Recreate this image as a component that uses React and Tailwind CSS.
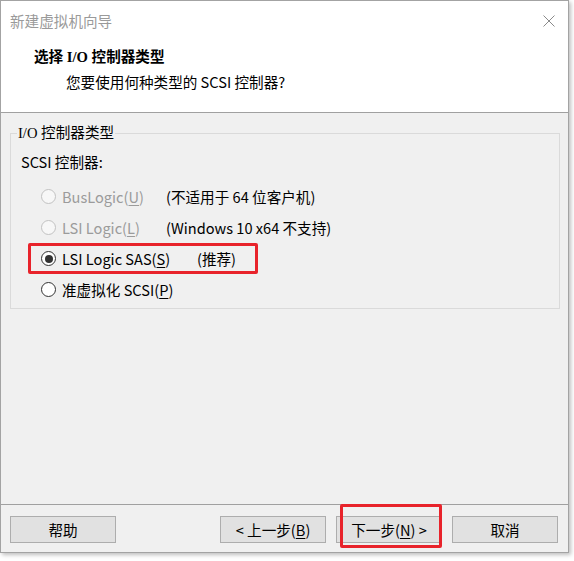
import React from "react";

const ui = { fontFamily: '"Noto Sans CJK SC", sans-serif' };
const serifMix = { fontFamily: '"Liberation Serif", "Noto Sans CJK SC", serif' };

function Radio({ state }) {
  if (state === "disabled")
    return <span className="w-[15px] h-[15px] rounded-full border border-[#c2c2c2] bg-[#f7f7f7] shrink-0" />;
  if (state === "checked")
    return (
      <span className="w-[15px] h-[15px] rounded-full border border-[#333333] bg-white shrink-0 flex items-center justify-center">
        <span className="w-[8px] h-[8px] rounded-full bg-[#333333]" />
      </span>
    );
  return <span className="w-[15px] h-[15px] rounded-full border border-[#333333] bg-white shrink-0" />;
}

function Row({ state, label, desc, labelW = "w-[104px]", highlight }) {
  return (
    <div className="relative h-[31px] flex items-center pl-[30px] whitespace-nowrap">
      <Radio state={state} />
      <span className={`ml-[6px] ${desc ? labelW : ""} shrink-0 ${state === "disabled" ? "text-[#9b9b9b]" : "text-black"}`}>{label}</span>
      {desc && <span className="text-black">{desc}</span>}
      {highlight && (
        <span className="absolute left-[17px] top-0 w-[230px] h-[31px] border-[3px] border-[#e8232b] rounded-[2px]" />
      )}
    </div>
  );
}

function Btn({ children }) {
  return (
    <div className="w-[106px] h-[27px] bg-[#e1e1e1] border border-[#adadad] flex items-center justify-center text-black whitespace-nowrap">
      {children}
    </div>
  );
}

export default function App() {
  return (
    <div className="w-[574px] h-[561px] bg-white text-[14.6px] leading-[20px]" style={ui}>
      <div className="w-[569px] h-[553px] border border-[#a3a3a3] bg-[#f0f0f0] flex flex-col shadow-[2px_2px_4px_rgba(0,0,0,0.25)]">
        <div className="h-[112px] bg-white border-b border-[#a0a0a0] shrink-0">
          <div className="h-[40px] flex items-center justify-between pl-[9px] pr-[13px]">
            <span className="text-[#9a9a9a]">新建虚拟机向导</span>
            <svg width="12" height="12" viewBox="0 0 12 12">
              <path d="M0.5 0.5 L11.5 11.5 M11.5 0.5 L0.5 11.5" stroke="#8a8a8a" strokeWidth="1" fill="none" />
            </svg>
          </div>
          <div className="mt-[6px] pl-[33px] font-bold text-black" style={serifMix}>选择 I/O 控制器类型</div>
          <div className="mt-[5px] pl-[65px] text-black">您要使用何种类型的 SCSI 控制器?</div>
        </div>

        <div className="flex-1 pt-[10px]">
          <fieldset className="ml-[9px] w-[550px] h-[186px] border border-[#dadada] m-0 p-0">
            <legend className="ml-[6px] px-[1px] text-black" style={serifMix}>I/O 控制器类型</legend>
            <div className="pt-[9px] pl-[10px] text-black">SCSI 控制器:</div>
            <div className="mt-[9px]">
              <Row state="disabled" label={<>BusLogic(<u className="underline-offset-2">U</u>)</>} desc="(不适用于 64 位客户机)" />
              <Row state="disabled" label={<>LSI Logic(<u className="underline-offset-2">L</u>)</>} desc="(Windows 10 x64 不支持)" />
              <Row state="checked" labelW="w-[135px]" label={<>LSI Logic SAS(<u className="underline-offset-2">S</u>)</>} desc="(推荐)" highlight />
              <Row state="normal" label={<>准虚拟化 SCSI(<u className="underline-offset-2">P</u>)</>} />
            </div>
          </fieldset>
        </div>

        <div className="h-[48px] shrink-0 border-t border-[#a0a0a0] pt-[11px] pl-[9px] pr-[10px] flex items-start">
          <Btn>帮助</Btn>
          <div className="flex-1" />
          <div className="flex gap-[10px]">
            <Btn>&lt; 上一步(<u className="underline-offset-2">B</u>)</Btn>
            <div className="relative">
              <Btn>下一步(<u className="underline-offset-2">N</u>) &gt;</Btn>
              <span className="absolute left-[4px] top-[-12px] w-[102px] h-[44px] border-[3px] border-[#e8232b] rounded-[2px]" />
            </div>
            <Btn>取消</Btn>
          </div>
        </div>
      </div>
    </div>
  );
}
